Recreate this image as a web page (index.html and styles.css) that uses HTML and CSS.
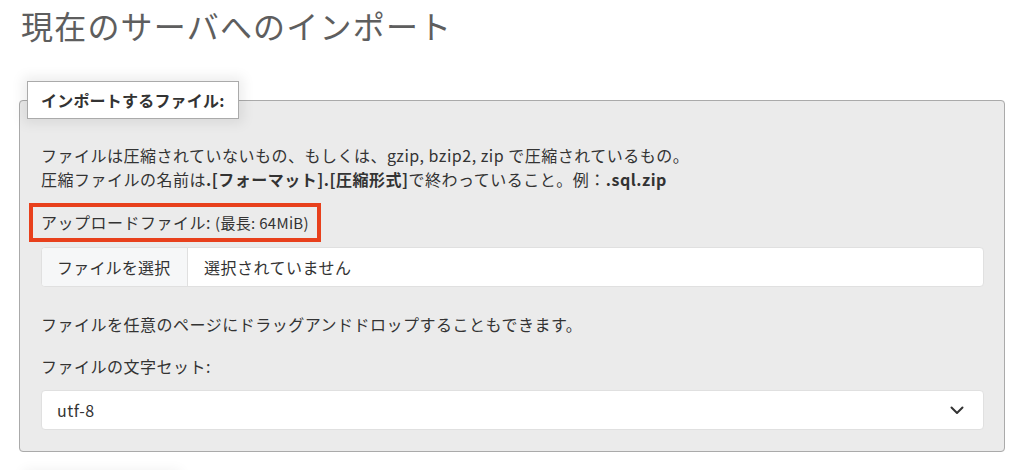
FILE: index.html
```html
<!DOCTYPE html>
<html lang="ja">
<head>
<meta charset="utf-8">
<title>現在のサーバへのインポート</title>
<link rel="stylesheet" href="styles.css">
</head>
<body>
<div class="page">
  <h2 class="title">現在のサーバへのインポート</h2>
  <fieldset class="box">
    <legend class="box-legend">インポートするファイル:</legend>
    <p class="note">ファイルは圧縮されていないもの、もしくは、gzip, bzip2, zip で圧縮されているもの。<br>圧縮ファイルの名前は<b>.[フォーマット].[圧縮形式]</b>で終わっていること。例：<b>.sql.zip</b></p>
    <div class="upload-label"><span class="hl">アップロードファイル: <small>(最長: 64MiB)</small></span></div>
    <div class="file-input">
      <span class="file-btn">ファイルを選択</span>
      <span class="file-name">選択されていません</span>
    </div>
    <p class="drag">ファイルを任意のページにドラッグアンドドロップすることもできます。</p>
    <p class="charset-label">ファイルの文字セット:</p>
    <div class="select">
      <span>utf-8</span>
      <svg class="chev" width="14" height="9" viewBox="0 0 14 9"><path d="M1.5 1.5 L7 7 L12.5 1.5" fill="none" stroke="#333" stroke-width="2" stroke-linecap="round" stroke-linejoin="round"/></svg>
    </div>
  </fieldset>
  <div class="next-legend"></div>
</div>
</body>
</html>
```

FILE: styles.css
```css
html, body {
  margin: 0;
  padding: 0;
  background: #fff;
}
body {
  font-family: "Noto Sans CJK JP", "Noto Sans", sans-serif;
  color: #333;
  font-size: 16px;
  line-height: 24px;
  letter-spacing: 0.5px;
  overflow: hidden;
}
.page {
  padding: 0 19px;
}
.title {
  margin: 0 0 36px 0;
  padding-top: 5px;
  font-size: 32px;
  line-height: 40px;
  font-weight: 400;
  color: #5e5e5e;
  letter-spacing: 1.2px;
  padding-left: 2px;
}
.box {
  margin: 0;
  border: 1px solid #aaa;
  border-radius: 4px;
  background: #ebebeb;
  padding: 24px 20px 21px 21px;
  min-width: 0;
}
.box-legend {
  margin-left: -14px;
  background: #fff;
  border: 1px solid #aaa;
  padding: 6px 13px;
  font-weight: 700;
  font-size: 16px;
  line-height: 24px;
  color: #333;
  letter-spacing: 0.2px;
  box-shadow: 0 0 12px 4px rgba(0,0,0,0.08);
}
.note {
  margin: 0;
}
.note b {
  font-weight: 700;
}
.upload-label {
  margin-top: 12px;
  margin-left: -12px;
  line-height: 0;
}
.hl {
  display: inline-block;
  border: 4px solid #e8401c;
  padding: 3px 8px;
  line-height: 24px;
}
.hl small {
  font-size: 15px;
  letter-spacing: 0.3px;
}
.file-input {
  margin-top: 5px;
  display: flex;
  height: 40px;
  border: 1px solid #e0e0e0;
  border-radius: 4px;
  background: #fff;
  box-sizing: border-box;
  overflow: hidden;
}
.file-btn {
  display: flex;
  align-items: center;
  padding: 0 15px;
  background: #f6f7f8;
  border-right: 1px solid #e0e0e0;
  width: 146px;
  flex: none;
  box-sizing: border-box;
  white-space: nowrap;
  letter-spacing: 0.2px;
}
.file-name {
  display: flex;
  align-items: center;
  padding-left: 16px;
  white-space: nowrap;
}
.drag {
  margin: 25px 0 0 0;
}
.charset-label {
  margin: 18px 0 0 0;
}
.select {
  margin-top: 12px;
  height: 40px;
  box-sizing: border-box;
  border: 1px solid #e0e0e0;
  border-radius: 4px;
  background: #fff;
  display: flex;
  align-items: center;
  justify-content: space-between;
  padding: 0 19px 0 15px;
}
.next-legend {
  margin: 22px 0 0 8px;
  width: 150px;
  height: 38px;
  background: #fff;
  box-shadow: 0 0 12px 4px rgba(0,0,0,0.06);
}
```
